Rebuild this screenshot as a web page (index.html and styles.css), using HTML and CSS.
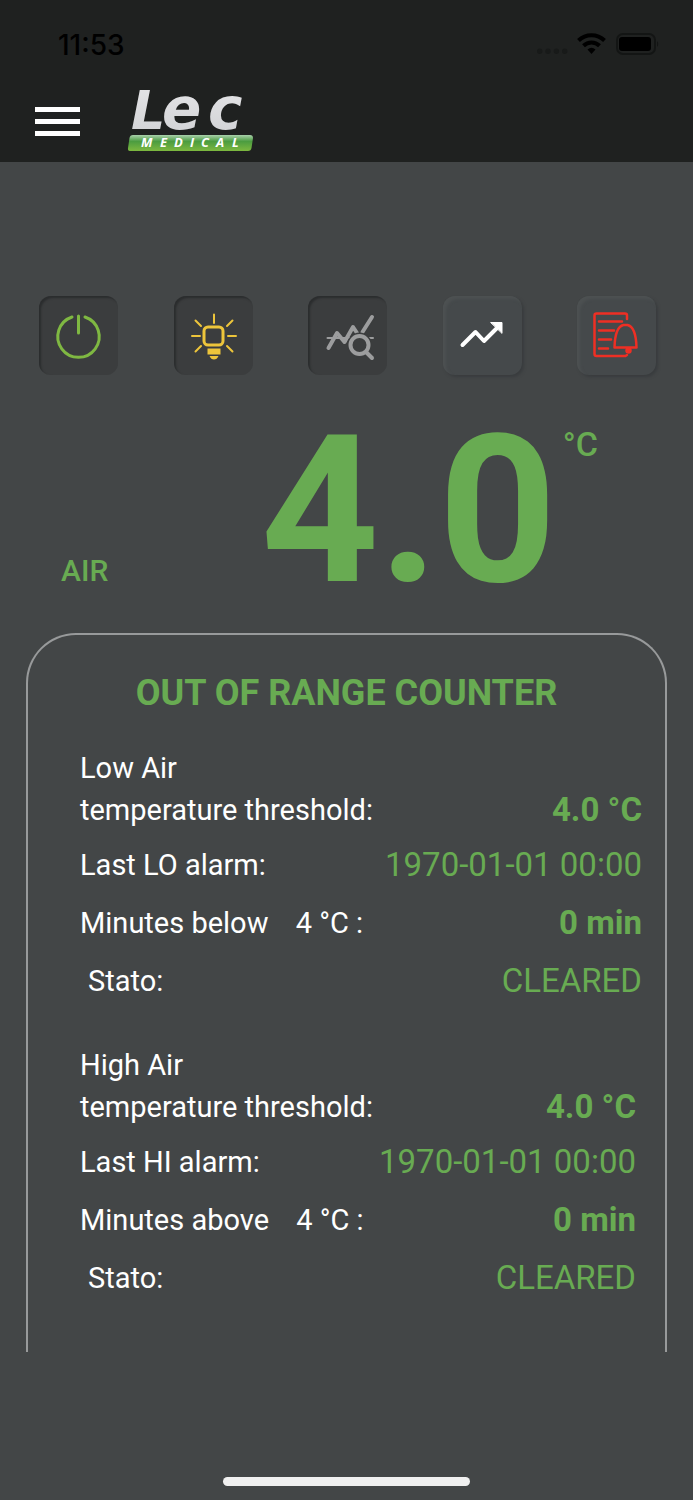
FILE: index.html
```html
<!DOCTYPE html>
<html lang="en">
  <head>
    <meta charset="UTF-8">
    <meta name="viewport" content="width=device-width, initial-scale=1">
    <title>Lec Medical</title>
    <link rel="stylesheet" href="styles.css">
  </head>
  <body>
    <header class="header">
      <div class="status-bar">
        <span class="time">11:53</span>
        <div class="status-icons">
          <svg width="122" height="24" viewBox="0 0 122 24" aria-hidden="true">
            <g fill="#181a19">
              <circle cx="2.7" cy="18.3" r="2.7"/>
              <circle cx="11" cy="18.3" r="2.7"/>
              <circle cx="19.4" cy="18.3" r="2.7"/>
              <circle cx="27.7" cy="18.3" r="2.7"/>
            </g>
            <g fill="none" stroke="#000" stroke-width="4">
              <path d="M41.5 7.5A18.5 18.5 0 0 1 67.5 7.5"/>
              <path d="M46.5 12.7A11.5 11.5 0 0 1 62.5 12.7"/>
            </g>
            <path d="M50.5 16.5Q54.5 13 58.5 16.5L54.5 21Z"/>
            <rect x="80" y="1" width="38" height="20" rx="6" fill="none" stroke="#131514" stroke-width="2"/>
            <rect x="82" y="4" width="32" height="14" rx="3"/>
            <path d="M120 8Q122.5 11 120 14Z" fill="#131514"/>
          </svg>
        </div>
      </div>
      <div class="nav-bar">
        <button class="menu-button" type="button" aria-label="Menu">
          <span></span>
          <span></span>
          <span></span>
        </button>
        <svg class="logo" width="128" height="64" viewBox="0 0 128 64" role="img" aria-label="Lec Medical">
          <defs>
            <linearGradient id="silver" x1="0" y1="0" x2="0" y2="1">
              <stop offset="0" stop-color="#e8e8ea"/>
              <stop offset="1" stop-color="#cfd0d3"/>
            </linearGradient>
            <linearGradient id="green" x1="0" y1="0" x2="0" y2="1">
              <stop offset="0" stop-color="#a9d0ab"/>
              <stop offset=".4" stop-color="#4b9c40"/>
              <stop offset="1" stop-color="#7db83f"/>
            </linearGradient>
          </defs>
          <g class="logo-name" fill="url(#silver)">
            <text x="3 34 80" y="41"><tspan font-size="54">L</tspan><tspan font-size="58">ec</tspan></text>
          </g>
          <path d="M5 47H122Q125 47 125 50L123.5 60Q123 63 120 63H2Q-.5 63 0 60L1.5 50Q2 47 5 47Z" fill="url(#green)"/>
          <text class="logo-tag" x="13 32 46 62 73 88 104" y="59">MEDICAL</text>
        </svg>
      </div>
    </header>

    <main>
      <div class="toolbar">
        <button class="tool pressed" type="button" aria-label="Power">
          <svg width="79" height="79" viewBox="0 0 79 79" fill="none" stroke="#7fb842" stroke-width="3" stroke-linecap="round">
            <path d="M33 21A20.7 20.7 0 1 0 46 21M39.5 20V37"/>
          </svg>
        </button>
        <button class="tool pressed" type="button" aria-label="Light">
          <svg width="79" height="79" viewBox="0 0 79 79" fill="none" stroke="#edc53b" stroke-width="2" stroke-linecap="round">
            <rect x="30" y="31" width="19" height="18" rx="4" stroke-width="3"/>
            <path d="M40 18.5V27M21.5 24.5L27 30M58.5 24.5L53 30M18 40H26M54 40H62M27 50L21.5 55.5M53 50L58.5 55.5"/>
            <path d="M33.5 52.5H46.500V58.5H33.5ZM35.5 60H44.5Q43 63.5 40 63.5T35.5 60Z" fill="#edc53b" stroke="none"/>
          </svg>
        </button>
        <button class="tool pressed" type="button" aria-label="Analyse data">
          <svg width="79" height="79" viewBox="0 0 79 79" fill="none" stroke="#9c9d9e" stroke-width="4" stroke-linecap="round" stroke-linejoin="round">
            <path d="M19.5 42H65" stroke-width="2"/>
            <path d="M54 35L64 21" stroke="#3b3d3e" stroke-width="7"/>
            <path d="M20.5 52L29 37L36.5 46L45 31L49 37M54.5 36L64 21"/>
            <circle cx="51.5" cy="49" r="12.5" fill="#3b3d3e" stroke="none"/>
            <circle cx="51.5" cy="49" r="9"/>
            <path d="M58.5 56.500L64 62"/>
          </svg>
        </button>
        <button class="tool" type="button" aria-label="Trend">
          <svg width="79" height="79" viewBox="0 0 79 79" fill="none" stroke="#fff" stroke-width="4" stroke-linecap="round" stroke-linejoin="round">
            <path d="M19.5 49L32.5 36L41 45L54 32"/>
            <path d="M48 26.5H59V37Z" fill="#fff" stroke-width="1"/>
          </svg>
        </button>
        <button class="tool" type="button" aria-label="Alarm log">
          <svg width="79" height="79" viewBox="0 0 79 79" fill="none" stroke="#ee2f24" stroke-width="2.5" stroke-linecap="round" stroke-linejoin="round">
            <path d="M50 23V19.5Q50 17.5 48 17.5H19.5Q17.5 17.5 17.5 19.5V58Q17.5 60 19.5 60H48.5L50 59"/>
            <path d="M22 25.5H45M22 34.5H37M22 43.5H34M22 52.5H31"/>
            <path d="M37.5 51.5H59.5Q59 31 50.5 29H46.5Q38 31 37.5 51.5Z"/>
            <circle cx="51.5" cy="54.5" r="2" fill="#ee2f24"/>
          </svg>
        </button>
      </div>

      <section class="reading">
        <span class="sensor">AIR</span>
        <span class="temperature">4.0</span>
        <span class="unit">°C</span>
      </section>

      <section class="counter">
        <h1>OUT OF RANGE COUNTER</h1>
        <dl class="low">
          <div class="row threshold">
            <dt>Low Air<br>temperature threshold:</dt>
            <dd><b>4.0 °C</b></dd>
          </div>
          <div class="row">
            <dt>Last LO alarm:</dt>
            <dd>1970-01-01 00:00</dd>
          </div>
          <div class="row">
            <dt>Minutes below <span class="limit">4 °C :</span></dt>
            <dd><b>0 min</b></dd>
          </div>
          <div class="row state">
            <dt>Stato:</dt>
            <dd>CLEARED</dd>
          </div>
        </dl>
        <dl class="high">
          <div class="row threshold">
            <dt>High Air<br>temperature threshold:</dt>
            <dd><b>4.0 °C</b></dd>
          </div>
          <div class="row">
            <dt>Last HI alarm:</dt>
            <dd>1970-01-01 00:00</dd>
          </div>
          <div class="row">
            <dt>Minutes above <span class="limit">4 °C :</span></dt>
            <dd><b>0 min</b></dd>
          </div>
          <div class="row state">
            <dt>Stato:</dt>
            <dd>CLEARED</dd>
          </div>
        </dl>
      </section>
    </main>

    <div class="home-indicator"></div>
  </body>
</html>
```

FILE: styles.css
```css
* {
  box-sizing: border-box;
}

body {
  margin: 0;
  min-height: 100vh;
  display: flex;
  flex-direction: column;
  background: #434647;
  color: #fff;
  font-family: Roboto, "Liberation Sans", sans-serif;
}

button {
  padding: 0;
  border: 0;
  background: none;
  cursor: pointer;
}

/* header */

.header {
  padding: 30px 34px 10px 35px;
  background: #1f2120;
}

.status-bar {
  display: flex;
  justify-content: space-between;
  align-items: center;
  height: 30px;
  padding-left: 23px;
  color: #000;
}

.time {
  font: 500 28px/30px Inter, "Liberation Sans", sans-serif;
}

.status-icons,
.nav-bar {
  display: flex;
}

.nav-bar {
  align-items: center;
  gap: 48px;
  margin-top: 28px;
}

.menu-button {
  display: flex;
  flex-direction: column;
  gap: 7px;
  width: 45px;
  padding-top: 2px;
}

.menu-button span {
  width: 100%;
  height: 5px;
  background: #fff;
}

.logo {
  overflow: visible;
}

.logo-name {
  font-family: "DejaVu Sans", sans-serif;
  font-weight: bold;
  font-style: italic;
}

.logo-tag {
  fill: #fff;
  font: italic bold 13px "Open Sans", sans-serif;
}

/* buttons */

.toolbar {
  display: flex;
  justify-content: space-between;
  padding: 134px 37px 0 39px;
}

.tool {
  width: 79px;
  height: 79px;
  border-radius: 12px;
  background: #45494b;
  box-shadow: inset 3px 3px 3px #4d5152, 2px 2px 3px #393c3e;
}

.tool.pressed {
  background: #3b3d3e;
  box-shadow: inset 2px 2px 2px #2b2d2e;
}

.tool svg {
  display: block;
}

/* current temperature */

.reading {
  display: flex;
  align-items: baseline;
  padding: 56px 95px 0 61px;
  color: #68ab52;
  font-weight: 500;
}

.sensor {
  flex: 1;
  font-size: 30px;
}

.temperature {
  font-size: 206px;
  font-weight: bold;
  line-height: 160px;
}

.unit {
  align-self: flex-start;
  margin-left: 6px;
  font-size: 34px;
  line-height: 26px;
}

/* out of range counter */

.counter {
  margin: 42px 26px 0;
  padding: 36px 23px 45px 52px;
  border: 2px solid #989a9b;
  border-bottom: 0;
  border-radius: 50px 50px 0 0;
}

h1 {
  margin: 0 29px 32px 0;
  color: #68ab52;
  font-size: 36px;
  font-weight: bold;
  line-height: 44px;
  text-align: center;
}

dl {
  margin: 0;
}

.high {
  margin-top: 34px;
  padding-right: 6px;
}

.row {
  display: flex;
  justify-content: space-between;
  align-items: center;
  height: 58px;
}

.threshold {
  align-items: flex-end;
  height: 89px;
  padding-bottom: 5px;
}

dt {
  font-size: 29px;
  line-height: 42px;
}

.state dt {
  padding-left: 8px;
}

.limit {
  margin-left: 20px;
}

dd {
  margin: 0;
  color: #68ab52;
  font-size: 33px;
  line-height: 42px;
}

.home-indicator {
  width: 247px;
  height: 9px;
  margin: auto auto 14px;
  border-radius: 5px;
  background: #f0f0f0;
}
```
